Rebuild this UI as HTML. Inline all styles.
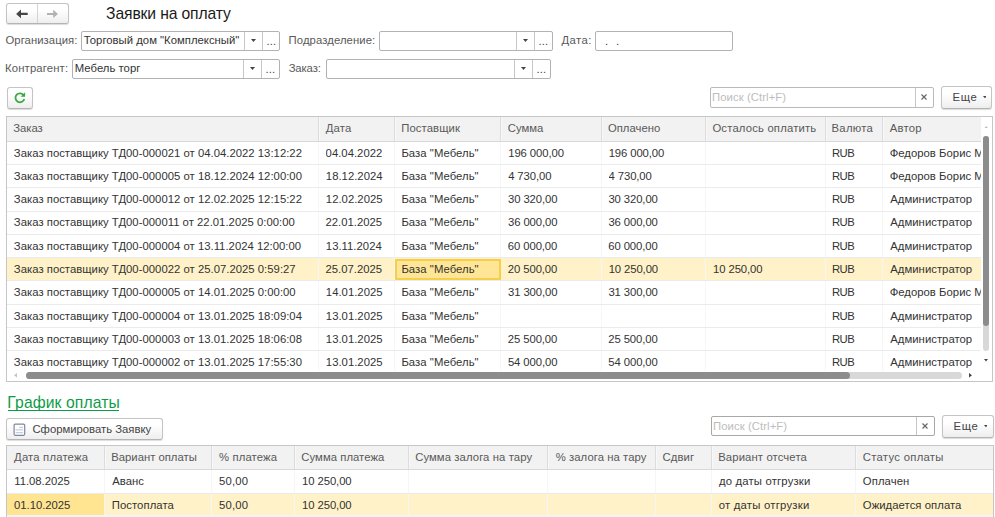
<!DOCTYPE html>
<html lang="ru"><head><meta charset="utf-8"><title>Заявки на оплату</title>
<style>
*{box-sizing:border-box;margin:0;padding:0}
html,body{width:995px;height:517px;overflow:hidden;background:#fff}
body{position:relative;font-family:"Liberation Sans",sans-serif;font-size:11.3px;color:#333}
.a{position:absolute;white-space:nowrap}
.lbl{color:#595959}
.inp{background:#fff;border:1px solid #b2b2b2;border-radius:2px}
.btn{border:1px solid #c4c4c4;border-bottom-color:#b4b4b4;border-radius:3px;background:linear-gradient(#ffffff 30%,#eeeeee);box-shadow:0 1px 1px rgba(0,0,0,.14)}
.ph{color:#bdbdbd}
.tbl{border:1px solid #c6c6c6;background:#fff;overflow:hidden}
.hd{background:#f2f2f2}
.vl{background:#f6f6f6;width:1px}
.vh{background:#dcdcdc;width:1px;box-shadow:1px 0 0 #f8f8f8}
.hl{background:#ebebeb;height:1px}
.sel{background:#fff2c8}
.t{line-height:14px;height:14px}
.v{color:#333}
</style></head><body>

<div class="a btn" style="left:6px;top:3px;width:63px;height:21px;border-radius:3px"></div>
<div class="a " style="left:37px;top:4px;width:1px;height:19px;background:#d4d4d4"></div>
<svg class="a" style="left:0;top:0" width="70" height="28" viewBox="0 0 70 28"><path d="M16.1 13.9 L21 9.5 L21 12.7 L27.7 12.7 L27.7 15.1 L21 15.1 L21 18.3 Z" fill="#454545"/><path d="M58 13.95 L53.2 9.8 L53.2 12.9 L47 12.9 L47 15 L53.2 15 L53.2 18.1 Z" fill="#b2b2b2"/></svg>
<div class="a t " style="left:106.11px;top:4.36px;color:#1a1a1a;letter-spacing:-0.135px;font-size:15.7px;line-height:20px;height:20px;">Заявки на оплату</div>
<div class="a t lbl" style="left:5.5px;top:33.48px;letter-spacing:0.054px;">Организация:</div>
<div class="a inp" style="left:81px;top:31px;width:199px;height:20px;"></div>
<div class="a t v" style="left:83.75px;top:33.48px;white-space:pre;letter-spacing:0.018px;">Торговый дом &quot;Комплексный&quot;</div>
<div class="a " style="left:244px;top:32px;width:1px;height:18px;background:#c6c6c6"></div>
<div class="a " style="left:262px;top:32px;width:1px;height:18px;background:#c6c6c6"></div>
<svg class="a" style="left:250.8px;top:39.1px" width="5" height="3" viewBox="0 0 5 3"><path d="M0 0 L5 0 L2.5 3 Z" fill="#444"/></svg>
<div class="a t " style="left:266.5px;top:34.28px;color:#444;letter-spacing:0.085px;">...</div>
<div class="a t lbl" style="left:288.6px;top:33.48px;letter-spacing:0.085px;">Подразделение:</div>
<div class="a inp" style="left:379px;top:31px;width:174px;height:20px;"></div>
<div class="a " style="left:516px;top:32px;width:1px;height:18px;background:#c6c6c6"></div>
<div class="a " style="left:534px;top:32px;width:1px;height:18px;background:#c6c6c6"></div>
<svg class="a" style="left:522.8px;top:39.1px" width="5" height="3" viewBox="0 0 5 3"><path d="M0 0 L5 0 L2.5 3 Z" fill="#444"/></svg>
<div class="a t " style="left:538.5px;top:34.28px;color:#444;letter-spacing:0.085px;">...</div>
<div class="a t lbl" style="left:561.55px;top:33.48px;letter-spacing:0.419px;">Дата:</div>
<div class="a inp" style="left:595px;top:31px;width:138px;height:20px;"></div>
<div class="a t v" style="left:605.1px;top:34px;white-space:pre;letter-spacing:7.66px">..</div>
<div class="a t lbl" style="left:5.1px;top:60.78px;letter-spacing:0.142px;">Контрагент:</div>
<div class="a inp" style="left:72px;top:59px;width:208px;height:20px;"></div>
<div class="a t v" style="left:74.8px;top:60.78px;white-space:pre;letter-spacing:0.021px;">Мебель торг</div>
<div class="a " style="left:243px;top:60px;width:1px;height:18px;background:#c6c6c6"></div>
<div class="a " style="left:261px;top:60px;width:1px;height:18px;background:#c6c6c6"></div>
<svg class="a" style="left:249.8px;top:67.1px" width="5" height="3" viewBox="0 0 5 3"><path d="M0 0 L5 0 L2.5 3 Z" fill="#444"/></svg>
<div class="a t " style="left:265.5px;top:61.58px;color:#444;letter-spacing:0.085px;">...</div>
<div class="a t lbl" style="left:288.65px;top:60.78px;letter-spacing:-0.108px;">Заказ:</div>
<div class="a inp" style="left:326px;top:59px;width:225px;height:20px;"></div>
<div class="a " style="left:514px;top:60px;width:1px;height:18px;background:#c6c6c6"></div>
<div class="a " style="left:532px;top:60px;width:1px;height:18px;background:#c6c6c6"></div>
<svg class="a" style="left:520.8px;top:67.1px" width="5" height="3" viewBox="0 0 5 3"><path d="M0 0 L5 0 L2.5 3 Z" fill="#444"/></svg>
<div class="a t " style="left:536.5px;top:61.58px;color:#444;letter-spacing:0.085px;">...</div>
<div class="a btn" style="left:7px;top:87px;width:26px;height:22px;"></div>
<svg class="a" style="left:12.9px;top:91.4px" width="13.6" height="13.6" viewBox="0 0 13 13"><path d="M10.3 4.2 A4.3 4.3 0 1 0 10.8 7.6" fill="none" stroke="#36ab40" stroke-width="1.7"/><path d="M11.6 1.3 L11.6 5.6 L7.3 5.6 Z" fill="#36ab40"/></svg>
<div class="a inp" style="left:710px;top:87px;width:224px;height:21px;border-color:#bababa"></div>
<div class="a t ph" style="left:712.0px;top:89.98px;letter-spacing:0.078px;">Поиск (Ctrl+F)</div>
<div class="a " style="left:915px;top:88px;width:1px;height:19px;background:#c6c6c6"></div>
<svg class="a" style="left:921.3px;top:94.2px" width="6" height="6" viewBox="0 0 6 6"><path d="M0.5 0.5 L5.5 5.5 M5.5 0.5 L0.5 5.5" stroke="#666" stroke-width="1.15" fill="none"/></svg>
<div class="a btn" style="left:941px;top:86px;width:51px;height:23px;"></div>
<div class="a t " style="left:952.6px;top:89.88px;color:#444;letter-spacing:0.596px;">Еще</div>
<svg class="a" style="left:982.5px;top:96.44999999999999px" width="3.8" height="2.3" viewBox="0 0 3.8 2.3"><path d="M0 0 L3.8 0 L1.9 2.3 Z" fill="#444"/></svg>
<div class="a inp" style="left:711px;top:416px;width:224px;height:20px;border-color:#a8a8a8"></div>
<div class="a t ph" style="left:713.0px;top:418.98px;letter-spacing:0.078px;">Поиск (Ctrl+F)</div>
<div class="a " style="left:916px;top:417px;width:1px;height:18px;background:#c6c6c6"></div>
<svg class="a" style="left:922.3px;top:423.2px" width="6" height="6" viewBox="0 0 6 6"><path d="M0.5 0.5 L5.5 5.5 M5.5 0.5 L0.5 5.5" stroke="#666" stroke-width="1.15" fill="none"/></svg>
<div class="a btn" style="left:942px;top:415px;width:52px;height:23px;"></div>
<div class="a t " style="left:953.6px;top:418.88px;color:#444;letter-spacing:0.596px;">Еще</div>
<svg class="a" style="left:983.5px;top:425.45000000000005px" width="3.8" height="2.3" viewBox="0 0 3.8 2.3"><path d="M0 0 L3.8 0 L1.9 2.3 Z" fill="#444"/></svg>
<div class="a tbl" style="left:6px;top:116px;width:987px;height:266px;"></div>
<div class="a hd" style="left:7px;top:117px;width:974px;height:24.099999999999994px;"></div>
<div class="a sel" style="left:7px;top:257.6px;width:974px;height:23.900000000000002px;"></div>
<div class="a vh" style="left:317.7px;top:117px;width:1px;height:24.099999999999994px;"></div>
<div class="a vl" style="left:317.7px;top:141.1px;width:1px;height:230.9px;"></div>
<div class="a vh" style="left:394.0px;top:117px;width:1px;height:24.099999999999994px;"></div>
<div class="a vl" style="left:394.0px;top:141.1px;width:1px;height:230.9px;"></div>
<div class="a vh" style="left:500.1px;top:117px;width:1px;height:24.099999999999994px;"></div>
<div class="a vl" style="left:500.1px;top:141.1px;width:1px;height:230.9px;"></div>
<div class="a vh" style="left:600.5px;top:117px;width:1px;height:24.099999999999994px;"></div>
<div class="a vl" style="left:600.5px;top:141.1px;width:1px;height:230.9px;"></div>
<div class="a vh" style="left:704.9px;top:117px;width:1px;height:24.099999999999994px;"></div>
<div class="a vl" style="left:704.9px;top:141.1px;width:1px;height:230.9px;"></div>
<div class="a vh" style="left:824.5px;top:117px;width:1px;height:24.099999999999994px;"></div>
<div class="a vl" style="left:824.5px;top:141.1px;width:1px;height:230.9px;"></div>
<div class="a vh" style="left:882.0px;top:117px;width:1px;height:24.099999999999994px;"></div>
<div class="a vl" style="left:882.0px;top:141.1px;width:1px;height:230.9px;"></div>
<div class="a hl" style="left:7px;top:140.6px;width:974px;height:1px;background:#d9d9d9"></div>
<div class="a hl" style="left:7px;top:163.9px;width:974px;height:1px;"></div>
<div class="a hl" style="left:7px;top:187.2px;width:974px;height:1px;"></div>
<div class="a hl" style="left:7px;top:210.5px;width:974px;height:1px;"></div>
<div class="a hl" style="left:7px;top:233.8px;width:974px;height:1px;"></div>
<div class="a hl" style="left:7px;top:257.1px;width:974px;height:1px;"></div>
<div class="a hl" style="left:7px;top:280.4px;width:974px;height:1px;"></div>
<div class="a hl" style="left:7px;top:303.7px;width:974px;height:1px;"></div>
<div class="a hl" style="left:7px;top:327.0px;width:974px;height:1px;"></div>
<div class="a hl" style="left:7px;top:350.3px;width:974px;height:1px;"></div>
<div class="a " style="left:395px;top:259px;width:106px;height:21px;background:#ffe696;border:2px solid #f8cd48"></div>
<div class="a t lbl" style="left:13.35px;top:120.78px;letter-spacing:-0.052px;">Заказ</div>
<div class="a t lbl" style="left:325.65px;top:120.78px;letter-spacing:0.237px;">Дата</div>
<div class="a t lbl" style="left:401.3px;top:120.78px;letter-spacing:0.075px;">Поставщик</div>
<div class="a t lbl" style="left:507.85px;top:120.78px;letter-spacing:0.007px;">Сумма</div>
<div class="a t lbl" style="left:607.9px;top:120.78px;letter-spacing:0.014px;">Оплачено</div>
<div class="a t lbl" style="left:712.4px;top:120.78px;letter-spacing:0.175px;">Осталось оплатить</div>
<div class="a t lbl" style="left:831.5px;top:120.78px;letter-spacing:0.282px;">Валюта</div>
<div class="a t lbl" style="left:889.8px;top:120.78px;letter-spacing:0.206px;">Автор</div>
<div class="a t v" style="left:13.85px;top:145.58px;width:304.3px;overflow:hidden;letter-spacing:0.023px;">Заказ поставщику ТД00-000021 от 04.04.2022 13:12:22</div>
<div class="a t v" style="left:325.6px;top:145.58px;width:68.9px;overflow:hidden;letter-spacing:0.020px;">04.04.2022</div>
<div class="a t v" style="left:401.4px;top:145.58px;width:99.2px;overflow:hidden;letter-spacing:0.052px;">База &quot;Мебель&quot;</div>
<div class="a t v" style="left:508.25px;top:145.58px;width:92.8px;overflow:hidden;letter-spacing:-0.097px;">196 000,00</div>
<div class="a t v" style="left:608.65px;top:145.58px;width:96.8px;overflow:hidden;letter-spacing:-0.097px;">196 000,00</div>
<div class="a t v" style="left:831.9px;top:145.58px;width:50.6px;overflow:hidden;letter-spacing:-0.485px;">RUB</div>
<div class="a t v" style="left:889.65px;top:145.58px;width:90.9px;overflow:hidden;letter-spacing:0.028px;">Федоров Борис М</div>
<div class="a t v" style="left:13.85px;top:168.88px;width:304.3px;overflow:hidden;letter-spacing:0.023px;">Заказ поставщику ТД00-000005 от 18.12.2024 12:00:00</div>
<div class="a t v" style="left:325.85px;top:168.88px;width:68.7px;overflow:hidden;letter-spacing:0.020px;">18.12.2024</div>
<div class="a t v" style="left:401.4px;top:168.88px;width:99.2px;overflow:hidden;letter-spacing:0.052px;">База &quot;Мебель&quot;</div>
<div class="a t v" style="left:508.15px;top:168.88px;width:92.8px;overflow:hidden;letter-spacing:-0.097px;">4 730,00</div>
<div class="a t v" style="left:608.55px;top:168.88px;width:96.9px;overflow:hidden;letter-spacing:-0.097px;">4 730,00</div>
<div class="a t v" style="left:831.9px;top:168.88px;width:50.6px;overflow:hidden;letter-spacing:-0.485px;">RUB</div>
<div class="a t v" style="left:889.65px;top:168.88px;width:90.9px;overflow:hidden;letter-spacing:0.028px;">Федоров Борис М</div>
<div class="a t v" style="left:13.85px;top:192.18px;width:304.3px;overflow:hidden;letter-spacing:0.023px;">Заказ поставщику ТД00-000012 от 12.02.2025 12:15:22</div>
<div class="a t v" style="left:325.85px;top:192.18px;width:68.7px;overflow:hidden;letter-spacing:0.020px;">12.02.2025</div>
<div class="a t v" style="left:401.4px;top:192.18px;width:99.2px;overflow:hidden;letter-spacing:0.052px;">База &quot;Мебель&quot;</div>
<div class="a t v" style="left:508.0px;top:192.18px;width:93.0px;overflow:hidden;letter-spacing:-0.097px;">30 320,00</div>
<div class="a t v" style="left:608.4px;top:192.18px;width:97.0px;overflow:hidden;letter-spacing:-0.097px;">30 320,00</div>
<div class="a t v" style="left:831.9px;top:192.18px;width:50.6px;overflow:hidden;letter-spacing:-0.485px;">RUB</div>
<div class="a t v" style="left:890.3px;top:192.18px;width:90.2px;overflow:hidden;letter-spacing:0.028px;">Администратор</div>
<div class="a t v" style="left:13.85px;top:215.48px;width:304.3px;overflow:hidden;letter-spacing:0.023px;">Заказ поставщику ТД00-000011 от 22.01.2025 0:00:00</div>
<div class="a t v" style="left:325.45px;top:215.48px;width:69.1px;overflow:hidden;letter-spacing:0.020px;">22.01.2025</div>
<div class="a t v" style="left:401.4px;top:215.48px;width:99.2px;overflow:hidden;letter-spacing:0.052px;">База &quot;Мебель&quot;</div>
<div class="a t v" style="left:508.0px;top:215.48px;width:93.0px;overflow:hidden;letter-spacing:-0.097px;">36 000,00</div>
<div class="a t v" style="left:608.4px;top:215.48px;width:97.0px;overflow:hidden;letter-spacing:-0.097px;">36 000,00</div>
<div class="a t v" style="left:831.9px;top:215.48px;width:50.6px;overflow:hidden;letter-spacing:-0.485px;">RUB</div>
<div class="a t v" style="left:890.3px;top:215.48px;width:90.2px;overflow:hidden;letter-spacing:0.028px;">Администратор</div>
<div class="a t v" style="left:13.85px;top:238.78px;width:304.3px;overflow:hidden;letter-spacing:0.023px;">Заказ поставщику ТД00-000004 от 13.11.2024 12:00:00</div>
<div class="a t v" style="left:325.85px;top:238.78px;width:68.7px;overflow:hidden;letter-spacing:0.020px;">13.11.2024</div>
<div class="a t v" style="left:401.4px;top:238.78px;width:99.2px;overflow:hidden;letter-spacing:0.052px;">База &quot;Мебель&quot;</div>
<div class="a t v" style="left:507.85px;top:238.78px;width:93.1px;overflow:hidden;letter-spacing:-0.097px;">60 000,00</div>
<div class="a t v" style="left:608.25px;top:238.78px;width:97.1px;overflow:hidden;letter-spacing:-0.097px;">60 000,00</div>
<div class="a t v" style="left:831.9px;top:238.78px;width:50.6px;overflow:hidden;letter-spacing:-0.485px;">RUB</div>
<div class="a t v" style="left:890.3px;top:238.78px;width:90.2px;overflow:hidden;letter-spacing:0.028px;">Администратор</div>
<div class="a t v" style="left:13.85px;top:262.08px;width:304.3px;overflow:hidden;letter-spacing:0.023px;">Заказ поставщику ТД00-000022 от 25.07.2025 0:59:27</div>
<div class="a t v" style="left:325.45px;top:262.08px;width:69.1px;overflow:hidden;letter-spacing:0.020px;">25.07.2025</div>
<div class="a t v" style="left:401.4px;top:262.08px;width:99.2px;overflow:hidden;letter-spacing:0.052px;">База &quot;Мебель&quot;</div>
<div class="a t v" style="left:507.85px;top:262.08px;width:93.1px;overflow:hidden;letter-spacing:-0.097px;">20 500,00</div>
<div class="a t v" style="left:608.65px;top:262.08px;width:96.8px;overflow:hidden;letter-spacing:-0.097px;">10 250,00</div>
<div class="a t v" style="left:713.05px;top:262.08px;width:112.0px;overflow:hidden;letter-spacing:-0.097px;">10 250,00</div>
<div class="a t v" style="left:831.9px;top:262.08px;width:50.6px;overflow:hidden;letter-spacing:-0.485px;">RUB</div>
<div class="a t v" style="left:890.3px;top:262.08px;width:90.2px;overflow:hidden;letter-spacing:0.028px;">Администратор</div>
<div class="a t v" style="left:13.85px;top:285.38px;width:304.3px;overflow:hidden;letter-spacing:0.023px;">Заказ поставщику ТД00-000005 от 14.01.2025 0:00:00</div>
<div class="a t v" style="left:325.85px;top:285.38px;width:68.7px;overflow:hidden;letter-spacing:0.020px;">14.01.2025</div>
<div class="a t v" style="left:401.4px;top:285.38px;width:99.2px;overflow:hidden;letter-spacing:0.052px;">База &quot;Мебель&quot;</div>
<div class="a t v" style="left:508.0px;top:285.38px;width:93.0px;overflow:hidden;letter-spacing:-0.097px;">31 300,00</div>
<div class="a t v" style="left:608.4px;top:285.38px;width:97.0px;overflow:hidden;letter-spacing:-0.097px;">31 300,00</div>
<div class="a t v" style="left:831.9px;top:285.38px;width:50.6px;overflow:hidden;letter-spacing:-0.485px;">RUB</div>
<div class="a t v" style="left:889.65px;top:285.38px;width:90.9px;overflow:hidden;letter-spacing:0.028px;">Федоров Борис М</div>
<div class="a t v" style="left:13.85px;top:308.68px;width:304.3px;overflow:hidden;letter-spacing:0.023px;">Заказ поставщику ТД00-000004 от 13.01.2025 18:09:04</div>
<div class="a t v" style="left:325.85px;top:308.68px;width:68.7px;overflow:hidden;letter-spacing:0.020px;">13.01.2025</div>
<div class="a t v" style="left:401.4px;top:308.68px;width:99.2px;overflow:hidden;letter-spacing:0.052px;">База &quot;Мебель&quot;</div>
<div class="a t v" style="left:831.9px;top:308.68px;width:50.6px;overflow:hidden;letter-spacing:-0.485px;">RUB</div>
<div class="a t v" style="left:890.3px;top:308.68px;width:90.2px;overflow:hidden;letter-spacing:0.028px;">Администратор</div>
<div class="a t v" style="left:13.85px;top:331.98px;width:304.3px;overflow:hidden;letter-spacing:0.023px;">Заказ поставщику ТД00-000003 от 13.01.2025 18:06:08</div>
<div class="a t v" style="left:325.85px;top:331.98px;width:68.7px;overflow:hidden;letter-spacing:0.020px;">13.01.2025</div>
<div class="a t v" style="left:401.4px;top:331.98px;width:99.2px;overflow:hidden;letter-spacing:0.052px;">База &quot;Мебель&quot;</div>
<div class="a t v" style="left:507.85px;top:331.98px;width:93.1px;overflow:hidden;letter-spacing:-0.097px;">25 500,00</div>
<div class="a t v" style="left:608.25px;top:331.98px;width:97.1px;overflow:hidden;letter-spacing:-0.097px;">25 500,00</div>
<div class="a t v" style="left:831.9px;top:331.98px;width:50.6px;overflow:hidden;letter-spacing:-0.485px;">RUB</div>
<div class="a t v" style="left:890.3px;top:331.98px;width:90.2px;overflow:hidden;letter-spacing:0.028px;">Администратор</div>
<div class="a t v" style="left:13.85px;top:355.28px;width:304.3px;overflow:hidden;letter-spacing:0.023px;">Заказ поставщику ТД00-000002 от 13.01.2025 17:55:30</div>
<div class="a t v" style="left:325.85px;top:355.28px;width:68.7px;overflow:hidden;letter-spacing:0.020px;">13.01.2025</div>
<div class="a t v" style="left:401.4px;top:355.28px;width:99.2px;overflow:hidden;letter-spacing:0.052px;">База &quot;Мебель&quot;</div>
<div class="a t v" style="left:507.95px;top:355.28px;width:93.0px;overflow:hidden;letter-spacing:-0.097px;">54 000,00</div>
<div class="a t v" style="left:608.35px;top:355.28px;width:97.1px;overflow:hidden;letter-spacing:-0.097px;">54 000,00</div>
<div class="a t v" style="left:831.9px;top:355.28px;width:50.6px;overflow:hidden;letter-spacing:-0.485px;">RUB</div>
<div class="a t v" style="left:890.3px;top:355.28px;width:90.2px;overflow:hidden;letter-spacing:0.028px;">Администратор</div>
<div class="a " style="left:981px;top:117px;width:11px;height:264px;background:#fff"></div>
<div class="a " style="left:983px;top:136px;width:6px;height:215px;background:#d8d8d8;border-radius:3px"></div>
<div class="a " style="left:983px;top:136px;width:6px;height:190px;background:#8c8c8c;border-radius:3px"></div>
<svg class="a" style="left:983.9px;top:125.5px" width="4.4" height="2.8" viewBox="0 0 4.4 2.8"><path d="M0 2.8 L4.4 2.8 L2.2 0 Z" fill="#bcbcbc"/></svg>
<svg class="a" style="left:984.0px;top:359.35px" width="4" height="2.5" viewBox="0 0 4 2.5"><path d="M0 0 L4 0 L2.0 2.5 Z" fill="#444"/></svg>
<div class="a " style="left:7px;top:371px;width:984px;height:10px;background:#fff"></div>
<div class="a " style="left:25.5px;top:372px;width:936px;height:7px;background:#d8d8d8;border-radius:3.5px"></div>
<div class="a " style="left:25.5px;top:372px;width:824.5px;height:7px;background:#8c8c8c;border-radius:3.5px"></div>
<svg class="a" style="left:14.3px;top:373.4px" width="3" height="4.4" viewBox="0 0 3 4.4"><path d="M3 0 L3 4.4 L0 2.2 Z" fill="#c4c4c4"/></svg>
<svg class="a" style="left:969.2px;top:373.2px" width="3" height="4.4" viewBox="0 0 3 4.4"><path d="M0 0 L0 4.4 L3 2.2 Z" fill="#444"/></svg>
<div class="a t " style="left:7.37px;top:392.96px;color:#0c9c48;letter-spacing:0.104px;font-size:15.7px;line-height:20px;height:20px;">График оплаты</div>
<div class="a " style="left:8.2px;top:410.4px;width:111px;height:1px;background:#0c9c48"></div>
<div class="a btn" style="left:6px;top:418px;width:157px;height:22px;"></div>
<svg class="a" style="left:12.6px;top:422.7px" width="13" height="13.5" viewBox="0 0 13 13.5"><rect x="1.1" y="1.1" width="10.6" height="11.2" rx="1.2" fill="#fefefe" stroke="#80879c" stroke-width="1.2"/><path d="M6.2 4.3 H10.1 M2.6 6.8 H10.1 M2.6 9.6 H10.1" stroke="#c3cfdd" stroke-width="1.3"/></svg>
<div class="a t " style="left:32.45px;top:421.98px;color:#444;">Сформировать Заявку</div>
<div class="a tbl" style="left:6px;top:445px;width:988px;height:80px;border-bottom:none"></div>
<div class="a hd" style="left:7px;top:446px;width:986px;height:23.5px;"></div>
<div class="a sel" style="left:7px;top:493.8px;width:986px;height:21.19999999999999px;"></div>
<div class="a " style="left:7px;top:493.8px;width:97.4px;height:21.19999999999999px;background:#ffe492"></div>
<div class="a " style="left:7px;top:515px;width:986px;height:2px;background:#f4f4f4"></div>
<div class="a vh" style="left:104.4px;top:446px;width:1px;height:23.5px;"></div>
<div class="a vl" style="left:104.4px;top:469.5px;width:1px;height:45.5px;"></div>
<div class="a vh" style="left:211.2px;top:446px;width:1px;height:23.5px;"></div>
<div class="a vl" style="left:211.2px;top:469.5px;width:1px;height:45.5px;"></div>
<div class="a vh" style="left:294.0px;top:446px;width:1px;height:23.5px;"></div>
<div class="a vl" style="left:294.0px;top:469.5px;width:1px;height:45.5px;"></div>
<div class="a vh" style="left:407.5px;top:446px;width:1px;height:23.5px;"></div>
<div class="a vl" style="left:407.5px;top:469.5px;width:1px;height:45.5px;"></div>
<div class="a vh" style="left:547.2px;top:446px;width:1px;height:23.5px;"></div>
<div class="a vl" style="left:547.2px;top:469.5px;width:1px;height:45.5px;"></div>
<div class="a vh" style="left:655.1px;top:446px;width:1px;height:23.5px;"></div>
<div class="a vl" style="left:655.1px;top:469.5px;width:1px;height:45.5px;"></div>
<div class="a vh" style="left:711.0px;top:446px;width:1px;height:23.5px;"></div>
<div class="a vl" style="left:711.0px;top:469.5px;width:1px;height:45.5px;"></div>
<div class="a vh" style="left:854.8px;top:446px;width:1px;height:23.5px;"></div>
<div class="a vl" style="left:854.8px;top:469.5px;width:1px;height:45.5px;"></div>
<div class="a hl" style="left:7px;top:469.0px;width:986px;height:1px;background:#d9d9d9"></div>
<div class="a hl" style="left:7px;top:493.3px;width:986px;height:1px;"></div>
<div class="a t lbl" style="left:14.05px;top:449.78px;letter-spacing:0.179px;">Дата платежа</div>
<div class="a t lbl" style="left:111.3px;top:449.78px;letter-spacing:-0.009px;">Вариант оплаты</div>
<div class="a t lbl" style="left:219.1px;top:449.78px;letter-spacing:0.112px;">% платежа</div>
<div class="a t lbl" style="left:301.35px;top:449.78px;letter-spacing:0.041px;">Сумма платежа</div>
<div class="a t lbl" style="left:415.15px;top:449.78px;letter-spacing:0.091px;">Сумма залога на тару</div>
<div class="a t lbl" style="left:555.7px;top:449.78px;letter-spacing:0.069px;">% залога на тару</div>
<div class="a t lbl" style="left:662.45px;top:449.78px;letter-spacing:0.120px;">Сдвиг</div>
<div class="a t lbl" style="left:718.2px;top:449.78px;letter-spacing:0.121px;">Вариант отсчета</div>
<div class="a t lbl" style="left:862.75px;top:449.78px;letter-spacing:0.294px;">Статус оплаты</div>
<div class="a t v" style="left:14.25px;top:473.88px;letter-spacing:-0.026px;">11.08.2025</div>
<div class="a t v" style="left:112.2px;top:473.88px;letter-spacing:0.040px;">Аванс</div>
<div class="a t v" style="left:219.05px;top:473.88px;letter-spacing:0.177px;">50,00</div>
<div class="a t v" style="left:302.05px;top:473.88px;letter-spacing:-0.086px;">10 250,00</div>
<div class="a t v" style="left:719.0px;top:473.88px;letter-spacing:0.173px;">до даты отгрузки</div>
<div class="a t v" style="left:862.8px;top:473.88px;letter-spacing:0.098px;">Оплачен</div>
<div class="a t v" style="left:14.1px;top:497.78px;letter-spacing:-0.036px;">01.10.2025</div>
<div class="a t v" style="left:111.7px;top:497.78px;letter-spacing:0.079px;">Постоплата</div>
<div class="a t v" style="left:219.05px;top:497.78px;letter-spacing:0.177px;">50,00</div>
<div class="a t v" style="left:302.05px;top:497.78px;letter-spacing:-0.086px;">10 250,00</div>
<div class="a t v" style="left:718.65px;top:497.78px;letter-spacing:0.241px;">от даты отгрузки</div>
<div class="a t v" style="left:862.8px;top:497.78px;letter-spacing:0.054px;">Ожидается оплата</div>
</body></html>
